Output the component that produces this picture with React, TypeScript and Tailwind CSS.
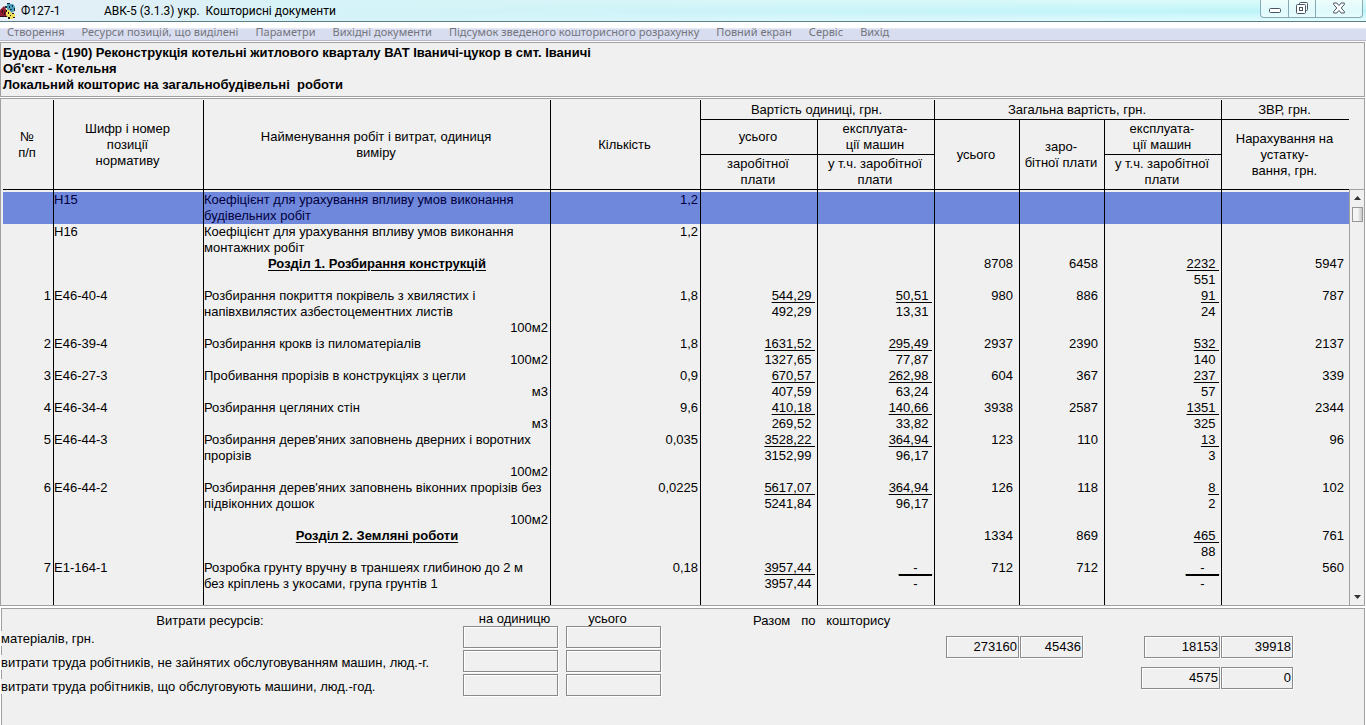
import type { ReactNode } from 'react'

interface Row {
  no?: string
  code?: string
  name: string
  unit?: string
  section?: boolean
  selected?: boolean
  qty?: string
  price?: [string, string]
  machine?: [string, string]
  total?: string
  wages?: string
  machineTotal?: [string, string]
  equipment?: string
}

const MENU = [
  'Створення',
  'Ресурси позицій, що виділені',
  'Параметри',
  'Вихідні документи',
  'Підсумок зведеного кошторисного розрахунку',
  'Повний екран',
  'Сервіс',
  'Вихід',
]

const NONE: [string, string] = ['__-__', '-    ']

const ROWS: Row[] = [
  { code: 'Н15', name: 'Коефіцієнт для урахування впливу умов виконання\nбудівельних робіт', qty: '1,2', selected: true },
  { code: 'Н16', name: 'Коефіцієнт для урахування впливу умов виконання\nмонтажних робіт', qty: '1,2' },
  { name: 'Розділ 1. Розбирання конструкцій', section: true, total: '8708', wages: '6458', machineTotal: ['2232 ', '551 '], equipment: '5947' },
  { no: '1', code: 'Е46-40-4', name: 'Розбирання покриття покрівель з хвилястих і\nнапівхвилястих азбестоцементних листів', unit: '100м2', qty: '1,8', price: ['544,29 ', '492,29 '], machine: ['50,51 ', '13,31 '], total: '980', wages: '886', machineTotal: ['91 ', '24 '], equipment: '787' },
  { no: '2', code: 'Е46-39-4', name: 'Розбирання крокв із пиломатеріалів', unit: '100м2', qty: '1,8', price: ['1631,52 ', '1327,65 '], machine: ['295,49 ', '77,87 '], total: '2937', wages: '2390', machineTotal: ['532 ', '140 '], equipment: '2137' },
  { no: '3', code: 'Е46-27-3', name: 'Пробивання прорізів в конструкціях з цегли', unit: 'м3', qty: '0,9', price: ['670,57 ', '407,59 '], machine: ['262,98 ', '63,24 '], total: '604', wages: '367', machineTotal: ['237 ', '57 '], equipment: '339' },
  { no: '4', code: 'Е46-34-4', name: 'Розбирання цегляних стін', unit: 'м3', qty: '9,6', price: ['410,18 ', '269,52 '], machine: ['140,66 ', '33,82 '], total: '3938', wages: '2587', machineTotal: ['1351 ', '325 '], equipment: '2344' },
  { no: '5', code: 'Е46-44-3', name: "Розбирання дерев'яних заповнень дверних і воротних\nпрорізів", unit: '100м2', qty: '0,035', price: ['3528,22 ', '3152,99 '], machine: ['364,94 ', '96,17 '], total: '123', wages: '110', machineTotal: ['13 ', '3 '], equipment: '96' },
  { no: '6', code: 'Е46-44-2', name: "Розбирання дерев'яних заповнень віконних прорізів без\nпідвіконних дошок", unit: '100м2', qty: '0,0225', price: ['5617,07 ', '5241,84 '], machine: ['364,94 ', '96,17 '], total: '126', wages: '118', machineTotal: ['8 ', '2 '], equipment: '102' },
  { name: 'Розділ 2. Земляні роботи', section: true, total: '1334', wages: '869', machineTotal: ['465 ', '88 '], equipment: '761' },
  { no: '7', code: 'Е1-164-1', name: 'Розробка грунту вручну в траншеях глибиною до 2 м\nбез кріплень з укосами, група грунтів 1', qty: '0,18', price: ['3957,44 ', '3957,44 '], machine: NONE, total: '712', wages: '712', machineTotal: NONE, equipment: '560' },
]

const RESOURCES = [
  'матеріалів, грн.',
  'витрати труда робітників, не зайнятих обслуговуванням машин, люд.-г.',
  'витрати труда робітників, що обслуговують машини, люд.-год.',
]

function Head({ children, rows, cols, last }: { children: ReactNode; rows?: number; cols?: number; last?: boolean }) {
  return (
    <th
      rowSpan={rows}
      colSpan={cols}
      className={`border-b border-black p-0 pr-0.5 text-center align-middle font-normal whitespace-pre-line ${last ? '' : 'border-r'}`}
    >
      {children}
    </th>
  )
}

// Upper value is underlined, lower one is its "including" part
function Fraction({ value }: { value?: [string, string] }) {
  return (
    <td className="border-r border-black p-0 pr-0.5 text-right whitespace-pre">
      {value && (
        <>
          <div className={`underline underline-offset-2 ${value === NONE ? 'decoration-2' : ''}`}>{value[0]}</div>
          <div>{value[1]}</div>
        </>
      )}
    </td>
  )
}

function Field({ label, value = '', className }: { label: string; value?: string; className: string }) {
  return (
    <input
      type="text"
      readOnly
      aria-label={label}
      value={value}
      className={`h-[22px] border border-[#8a8a8a] bg-[#f0f0f0] px-px pb-0.5 text-right shadow-[inset_1px_1px_0_#fff,1px_1px_0_#fff] outline-none ${className}`}
    />
  )
}

function AppIcon() {
  return (
    <svg className="h-[21px] w-4 shrink-0" viewBox="0 0 16 21" aria-hidden="true">
      <path d="M0 10 4 6l3 5v6H0z" fill="#8e1c30" />
      <path d="M0 16h8v1H0zM2 10h1v3H2zM4 12h1v3H4z" fill="#2a0d12" />
      <path d="M7 4h6l2 3v4l-4 2-4-2z" fill="#4d9dbd" />
      <path d="M7 3h3v1H7zM9 6h1v2H9zM12 5h1v2h-1zM14 8h1v3h-1zM10 9h2v1h-2zM5 6h2v2H5z" fill="#12303c" />
      <path d="m6 9 3 1 3 3 3 1v3l-3 2h-3l-3-4z" fill="#efdf5c" />
      <path d="M6 10h1v2H6zM8 12h1v2H8zM12 13h2v1h-2zM10 15h1v1h-1zM8 17h2v2H8zM13 17h2v1h-2z" fill="#1c1a10" />
    </svg>
  )
}

function TitleBar() {
  return (
    <header className="flex h-[22px] items-start border-b border-[#5f7d86] bg-linear-to-b from-[#dcfbf9] via-[#bdf4f9] via-55% to-[#e2fcfd]">
      <div className="flex h-[21px] flex-1 items-center bg-linear-to-r from-[#e6eef6] via-[#d5f3f8] via-25% to-transparent">
        <AppIcon />
        <h1 className="ml-[5px] whitespace-pre font-[Roboto,sans-serif] text-[12px] text-black">
          <span className="inline-block w-[83px]">Ф127-1</span>
          {'АВК-5 (3.1.3) укр.  Кошторисні документи'}
        </h1>
      </div>
      <div className="mr-[3px] flex h-[18px] rounded-b border border-t-0 border-[#86a9b3] bg-white/50">
        <button aria-label="Згорнути" className="flex w-7 items-center justify-center border-r border-[#86a9b3]">
          <svg className="h-3 w-3" viewBox="0 0 12 12"><rect x=".5" y="5.5" width="11" height="4" rx="1" fill="#fff" stroke="#4a5566" /></svg>
        </button>
        <button aria-label="Відновити" className="flex w-[27px] items-start justify-center border-r border-[#86a9b3] pt-0.5">
          <svg className="h-3 w-3" viewBox="0 0 12 12" fill="#fff" stroke="#4a5566">
            <rect x="3.5" y=".5" width="8" height="8" rx="1" />
            <rect x=".5" y="2.5" width="9" height="9" rx="1" />
            <rect x="3.5" y="5.5" width="3" height="3" />
          </svg>
        </button>
        <button aria-label="Закрити" className="flex w-[46px] items-start justify-center pt-0.5">
          <svg className="h-3 w-3" viewBox="0 0 12 12" fill="#fff" stroke="#4a5566">
            <path d="M.7 1h3.200L6 3.600 8.100 1h3.200v1.500L8.200 6l3.100 3.500V11H8.100L6 8.400 3.900 11H.7V9.500L3.800 6 .7 2.500z" />
          </svg>
        </button>
      </div>
    </header>
  )
}

export default function App() {
  return (
    <div className="flex min-h-screen flex-col bg-white font-['Liberation_Sans',Arial,sans-serif] text-[13px] leading-4 text-black">
      <TitleBar />

      <nav className="flex h-[19px] items-center gap-[17px] border-b border-[#b4b8c8] bg-linear-to-b from-white from-30% to-[#d8def0] to-40% pt-px pl-[7px] font-['Noto_Sans',sans-serif] text-[11px] text-[#74747c]">
        {MENU.map((item) => (
          <button key={item} className="whitespace-nowrap">{item}</button>
        ))}
      </nav>

      {/* Estimate title */}
      <section className="mt-px mr-px h-[55px] border border-[#a0a0a0] bg-[#f0f0f0] pt-0.5 pl-0.5 font-bold whitespace-pre">
        <p>Будова - (190) Реконструкція котельні житлового кварталу ВАТ Іваничі-цукор в смт. Іваничі</p>
        <p>Об'єкт - Котельня</p>
        <p>{'Локальний кошторис на загальнобудівельні  роботи'}</p>
      </section>

      {/* Estimate lines */}
      <section className="mt-px mr-px flex border border-[#a0a0a0] bg-[#f0f0f0] pt-px pl-0.5">
        <table className="min-w-0 flex-1 table-fixed border-separate border-spacing-0">
          <colgroup>
            <col className="w-[51px]" />
            <col className="w-[150px]" />
            <col />
            <col className="w-[150px]" />
            <col className="w-[117px]" />
            <col className="w-[117px]" />
            <col className="w-[85px]" />
            <col className="w-[85px]" />
            <col className="w-[117px]" />
            <col className="w-[127px]" />
          </colgroup>
          <thead>
            <tr className="h-5">
              <Head rows={3}>{'№\nп/п'}</Head>
              <Head rows={3}>{'Шифр і номер\nпозиції\nнормативу'}</Head>
              <Head rows={3}>{'Найменування робіт і витрат, одиниця\nвиміру'}</Head>
              <Head rows={3}>Кількість</Head>
              <Head cols={2}>Вартість одиниці, грн.</Head>
              <Head cols={3}>Загальна вартість, грн.</Head>
              <Head last>ЗВР, грн.</Head>
            </tr>
            <tr className="h-[35px]">
              <Head>усього</Head>
              <Head>{'експлуата-\nції машин'}</Head>
              <Head rows={2}>усього</Head>
              <Head rows={2}>{'заро-\nбітної плати'}</Head>
              <Head>{'експлуата-\nції машин'}</Head>
              <Head rows={2} last>{'Нарахування на\nустатку-\nвання, грн.'}</Head>
            </tr>
            <tr className="h-[35px]">
              <Head>{'заробітної\nплати'}</Head>
              <Head>{'у т.ч. заробітної\nплати'}</Head>
              <Head>{'у т.ч. заробітної\nплати'}</Head>
            </tr>
          </thead>
          <tbody>
            <tr className="h-0.5">
              {Array.from({ length: 10 }, (_, i) => (
                <td key={i} className={`p-0 ${i < 9 ? 'border-r border-black' : ''}`} />
              ))}
            </tr>
            {ROWS.map((row) => (
              <tr key={row.name} className={`align-top last:h-[45px] ${row.selected ? 'bg-[#7088dc] text-[#00003c]' : ''}`}>
                <td className="border-r border-black p-0 pr-0.5 text-right">{row.no}</td>
                <td className="border-r border-black p-0">{row.code}</td>
                <td className={`border-r border-black p-0 whitespace-pre ${row.section ? 'text-center font-bold underline underline-offset-2' : ''}`}>
                  {row.name}
                  {row.unit && <div className="pr-0.5 text-right">{row.unit}</div>}
                </td>
                <td className="border-r border-black p-0 pr-0.5 text-right">{row.qty}</td>
                <Fraction value={row.price} />
                <Fraction value={row.machine} />
                <td className="border-r border-black p-0 pr-1.5 text-right">{row.total}</td>
                <td className="border-r border-black p-0 pr-1.5 text-right">{row.wages}</td>
                <Fraction value={row.machineTotal} />
                <td className="p-0 pr-[5px] text-right">{row.equipment}</td>
              </tr>
            ))}
          </tbody>
        </table>
        <div className="mt-[89px] flex w-[15px] flex-col items-center border-t border-l border-[#a0a0a0] bg-[#f0f0f0]">
          <button aria-label="Вгору" className="flex h-4 w-full items-center justify-center">
            <svg className="h-1 w-[7px]" viewBox="0 0 7 4"><path d="M0 4h7L3.500 0z" fill="#333" /></svg>
          </button>
          <div className="mt-px h-[15px] w-[11px] border border-[#979797] bg-linear-to-r from-[#f4f4f4] from-50% to-[#c8c8c8]" />
          <button aria-label="Вниз" className="mt-auto flex h-4 w-full items-center justify-center">
            <svg className="h-1 w-[7px]" viewBox="0 0 7 4"><path d="M0 0h7L3.500 4z" fill="#333" /></svg>
          </button>
        </div>
      </section>

      {/* Resources and totals */}
      <section className="mt-0.5 mr-px ml-px flex flex-1 items-start border border-b-0 border-[#a0a0a0] bg-[#f0f0f0]">
        <table className="mt-px -ml-px table-fixed border-separate border-spacing-0">
          <colgroup>
            <col className="w-[462px]" />
            <col className="w-[103px]" />
            <col className="w-[103px]" />
          </colgroup>
          <thead>
            <tr>
              <th className="p-0 pt-1.5 pr-11 text-center align-top leading-[10px] font-normal">Витрати ресурсів:</th>
              <th className="p-0 pt-0.5 text-center align-top leading-[14px] font-normal">на одиницю</th>
              <th className="p-0 pt-0.5 pr-5 text-center align-top leading-[14px] font-normal">усього</th>
            </tr>
          </thead>
          <tbody>
            {RESOURCES.map((label) => (
              <tr key={label} className="h-6">
                <th className="p-0 pt-0.5 text-left font-normal whitespace-nowrap">
                  <span className="bg-[#f0f0f0]">{label}</span>
                </th>
                <td className="p-0 align-top"><Field label={`${label} на одиницю`} className="block w-[95px]" /></td>
                <td className="p-0 align-top"><Field label={`${label} усього`} className="block w-[95px]" /></td>
              </tr>
            ))}
          </tbody>
        </table>
        <h2 className="mt-1 ml-[84px] whitespace-pre">{'Разом   по   кошторису'}</h2>
        <div className="mt-[27px] mr-[71px] ml-auto flex flex-col items-end gap-[9px]">
          <div className="flex gap-px">
            <Field label="Загальна вартість, усього" value="273160" className="w-[73px]" />
            <Field label="Заробітна плата" value="45436" className="mr-[60px] w-[63px]" />
            <Field label="Експлуатація машин" value="18153" className="w-[76px]" />
            <Field label="Нарахування на устаткування" value="39918" className="w-[72px]" />
          </div>
          <div className="flex gap-px">
            <Field label="Заробітна плата машиністів" value="4575" className="w-[79px]" />
            <Field label="Заробітна плата, устаткування" value="0" className="w-[72px]" />
          </div>
        </div>
      </section>
    </div>
  )
}
